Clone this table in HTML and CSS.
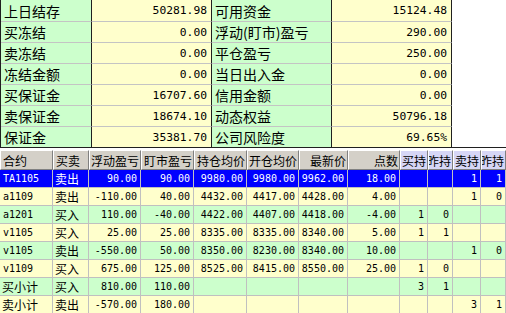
FILE: index.html
```html
<!DOCTYPE html>
<html>
<head>
<meta charset="utf-8">
<link rel="stylesheet" href="styles.css">
</head>
<body>
<div class="summary-wrap">
  <div class="summary">
    <div class="lbl">上日结存</div><div class="val">50281.98</div><div class="lbl">可用资金</div><div class="val">15124.48</div>
    <div class="lbl">买冻结</div><div class="val">0.00</div><div class="lbl">浮动(盯市)盈亏</div><div class="val">290.00</div>
    <div class="lbl">卖冻结</div><div class="val">0.00</div><div class="lbl">平仓盈亏</div><div class="val">250.00</div>
    <div class="lbl">冻结金额</div><div class="val">0.00</div><div class="lbl">当日出入金</div><div class="val">0.00</div>
    <div class="lbl">买保证金</div><div class="val">16707.60</div><div class="lbl">信用金额</div><div class="val">0.00</div>
    <div class="lbl">卖保证金</div><div class="val">18674.10</div><div class="lbl">动态权益</div><div class="val">50796.18</div>
    <div class="lbl">保证金</div><div class="val">35381.70</div><div class="lbl">公司风险度</div><div class="val">69.65%</div>
  </div>
</div>
<div class="positions">
  <div class="row head">
    <div class="l">合约</div><div class="l">买卖</div><div>浮动盈亏</div><div>盯市盈亏</div><div>持仓均价</div><div>开仓均价</div><div>最新价</div><div>点数</div>
    <div class="p">买持</div><div class="p">昨持</div><div class="p">卖持</div><div class="p">昨持</div>
  </div>
  <div class="row sel">
    <div class="l">TA1105</div><div class="c">卖出</div><div>90.00</div><div>90.00</div><div>9980.00</div><div>9980.00</div><div>9962.00</div><div>18.00</div><div></div><div></div><div>1</div><div>1</div>
  </div>
  <div class="row y">
    <div class="l">a1109</div><div class="c">卖出</div><div>-110.00</div><div>40.00</div><div>4432.00</div><div>4417.00</div><div>4428.00</div><div>4.00</div><div></div><div></div><div>1</div><div>0</div>
  </div>
  <div class="row g">
    <div class="l">a1201</div><div class="c">买入</div><div>110.00</div><div>-40.00</div><div>4422.00</div><div>4407.00</div><div>4418.00</div><div>-4.00</div><div>1</div><div>0</div><div></div><div></div>
  </div>
  <div class="row y">
    <div class="l">v1105</div><div class="c">买入</div><div>25.00</div><div>25.00</div><div>8335.00</div><div>8335.00</div><div>8340.00</div><div>5.00</div><div>1</div><div>1</div><div></div><div></div>
  </div>
  <div class="row g">
    <div class="l">v1105</div><div class="c">卖出</div><div>-550.00</div><div>50.00</div><div>8350.00</div><div>8230.00</div><div>8340.00</div><div>10.00</div><div></div><div></div><div>1</div><div>0</div>
  </div>
  <div class="row y">
    <div class="l">v1109</div><div class="c">买入</div><div>675.00</div><div>125.00</div><div>8525.00</div><div>8415.00</div><div>8550.00</div><div>25.00</div><div>1</div><div>0</div><div></div><div></div>
  </div>
  <div class="row g">
    <div class="l c">买小计</div><div class="c">买入</div><div>810.00</div><div>110.00</div><div></div><div></div><div></div><div></div><div>3</div><div>1</div><div></div><div></div>
  </div>
  <div class="row y">
    <div class="l c">卖小计</div><div class="c">卖出</div><div>-570.00</div><div>180.00</div><div></div><div></div><div></div><div></div><div></div><div></div><div>3</div><div>1</div>
  </div>
</div>
</body>
</html>
```

FILE: styles.css
```css
html, body {
  margin: 0;
  padding: 0;
  background: #ffffff;
}
body {
  width: 506px;
  height: 313px;
  overflow: hidden;
  color: #000;
}

/* ---- summary block ---- */
.summary-wrap {
  height: 148px;
  box-sizing: border-box;
  border-bottom: 1px solid #202020;
  margin-bottom: 2px;
}
.summary {
  display: grid;
  grid-template-columns: 91px 120px 120px 120px;
  grid-template-rows: 22px repeat(5, 21px) 20px;
  width: 452px;
  box-sizing: border-box;
  border-left: 1px solid #202020;
}
.summary > div {
  box-sizing: border-box;
  border-right: 1px solid #202020;
  border-bottom: 1px solid #c4c4c4;
  display: flex;
  align-items: center;
  white-space: nowrap;
  overflow: hidden;
}
.summary > div:nth-last-child(-n+4) {
  border-bottom: none;
}
.lbl {
  background: #ccffcc;
  font-family: "Noto Sans CJK SC", sans-serif;
  font-size: 14px;
  padding-left: 3px;
}
.val {
  background: #ffffcc;
  font-family: "DejaVu Sans Mono", monospace;
  font-size: 11.3px;
  justify-content: flex-end;
  padding-right: 4px;
}

/* ---- positions grid ---- */
.positions {
  width: 506px;
}
.row {
  display: grid;
  grid-template-columns: 53px 36px 52px 53px 53px 52px 49px 52px 28px 25px 28px 25px;
  height: 18px;
}
.row > div {
  box-sizing: border-box;
  border-right: 1px solid #c0c0c0;
  border-bottom: 1px solid #c0c0c0;
  display: flex;
  align-items: center;
  justify-content: flex-end;
  padding-right: 3px;
  white-space: nowrap;
  overflow: hidden;
  font-family: "DejaVu Sans Mono", monospace;
  font-size: 10px;
}
.row > div.l {
  justify-content: flex-start;
  padding-left: 3px;
  padding-right: 0;
}
.row > div.c {
  font-family: "Noto Sans CJK SC", sans-serif;
  font-size: 12px;
  justify-content: flex-start;
  padding-left: 2px;
  padding-right: 0;
}
.row.y > div { background: #ffffcc; }
.row.g > div { background: #ccffcc; }
.row.sel > div {
  background: #0000ff;
  color: #ffffff;
}

.row.head {
  height: 20px;
}
.row.head > div {
  background: #d4d0c8;
  border-style: solid;
  border-width: 1px;
  border-color: #ffffff #808080 #808080 #ffffff;
  font-family: "Noto Sans CJK SC", sans-serif;
  font-size: 12px;
  padding-right: 1px;
}
.row.head > div.l {
  padding-left: 2px;
}
.row.head > div.p {
  background: #d6d6f6;
}
```
